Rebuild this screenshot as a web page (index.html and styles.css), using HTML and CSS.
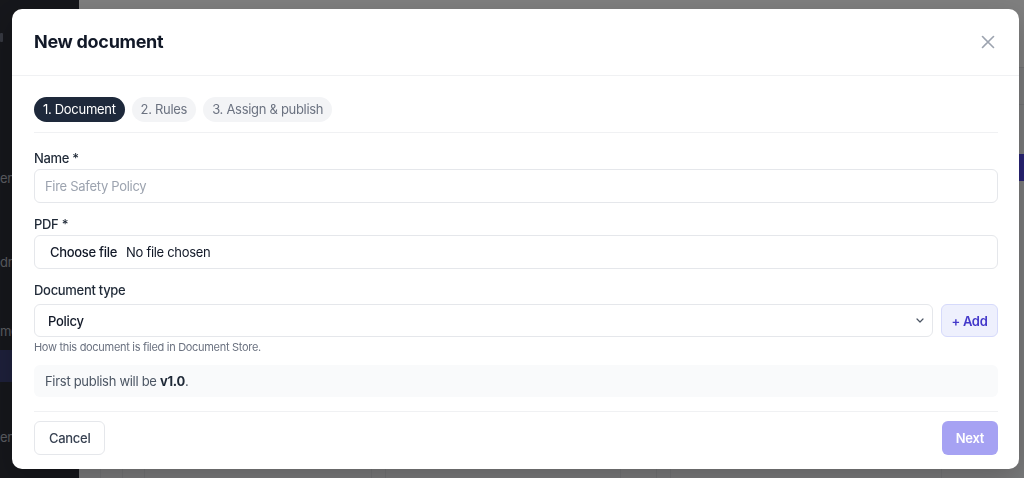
FILE: index.html
```html
<!DOCTYPE html>
<html lang="en">

<head>
    <meta charset="UTF-8">
    <meta name="viewport" content="width=device-width, initial-scale=1.0">
    <title>Documents | New document</title>
    <link rel="stylesheet" href="styles.css">
</head>

<body>
    <div class="app">
        <aside class="sidebar">
            <div class="sideLogo"></div>
            <nav class="sideNav">
                <a class="navItem item-first">entries</a>
                <a class="navItem item-second">drafts</a>
                <a class="navItem item-third">mem</a>
                <a class="navItem active"></a>
                <a class="navItem item-last">entry</a>
            </nav>
        </aside>

        <main class="main">
            <div class="topbar"></div>
            <div class="toolbar"></div>
            <div class="pageHead">
                <div class="primaryBtn"></div>
            </div>
            <div class="grid">
                <div class="card"><span class="col"></span><span class="col"></span></div>
                <div class="card"><span class="col wide"></span></div>
                <div class="card"></div>
            </div>
        </main>
    </div>

    <!-- Modal: nouveau document -->
    <div class="overlay">
        <div class="modal">
            <div class="modal_header">
                <h2>New document</h2>
                <button class="closeBtn" aria-label="Close">
                    <svg width="14" height="14" viewBox="0 0 14 14" fill="none" stroke="currentColor"
                        stroke-width="1.6" stroke-linecap="round">
                        <path d="M1.5 1.5 L12.5 12.5 M12.5 1.5 L1.5 12.5" />
                    </svg>
                </button>
            </div>

            <div class="modal_body">
                <div class="steps">
                    <span class="step current">1. Document</span>
                    <span class="step">2. Rules</span>
                    <span class="step">3. Assign &amp; publish</span>
                </div>

                <div class="field">
                    <label for="docName">Name *</label>
                    <input type="text" id="docName" class="form-control" placeholder="Fire Safety Policy">
                </div>

                <div class="field">
                    <label>PDF *</label>
                    <div class="form-control file_input">
                        <span class="file_btn">Choose file</span>
                        <span class="file_name">No file chosen</span>
                    </div>
                </div>

                <div class="field field-type">
                    <label for="docType">Document type</label>
                    <div class="type_row">
                        <div class="select_wrap">
                            <select id="docType" class="form-control">
                                <option>Policy</option>
                                <option>Procedure</option>
                                <option>Form</option>
                            </select>
                            <svg class="chevron" width="8" height="5" viewBox="0 0 8 5" fill="none"
                                stroke="currentColor" stroke-width="1.2" stroke-linecap="round"
                                stroke-linejoin="round">
                                <path d="M1 1 L4 4 L7 1" />
                            </svg>
                        </div>
                        <button class="addBtn">+ Add</button>
                    </div>
                    <p class="hint">How this document is filed in Document Store.</p>
                </div>

                <div class="info_box">First publish will be <strong>v1.0</strong>.</div>
            </div>

            <div class="modal_footer">
                <button class="btn btn-cancel">Cancel</button>
                <button class="btn btn-next" disabled>Next</button>
            </div>
        </div>
    </div>
</body>

</html>
```

FILE: styles.css
```css
* {
    box-sizing: border-box;
    margin: 0;
    padding: 0;
    font-family: 'Inter', 'Noto Sans', sans-serif;
    letter-spacing: -0.3px;
}

body {
    height: 100vh;
    overflow: hidden;
    background-color: #f3f4f6;
}

/* Page derrière la modale */
.app {
    display: flex;
    height: 100vh;
}

.sidebar {
    width: 79px;
    flex-shrink: 0;
    background-color: #2c2e37;
    overflow: hidden;
}

.sideLogo {
    width: 3px;
    height: 9px;
    margin-top: 33px;
    background-color: #6b7080;
    border-radius: 1px;
}

.sideNav {
    display: flex;
    flex-direction: column;
}

.navItem {
    display: block;
    color: #b4b8c0;
    font-size: 13px;
    white-space: nowrap;
    height: 32px;
    line-height: 32px;
}

.item-first {
    margin-top: 120px;
}

.item-second {
    margin-top: 52px;
}

.item-third {
    margin-top: 37px;
}

.navItem.active {
    margin-top: 3px;
    background-color: #3b4075;
}

.item-last {
    margin-top: 39px;
}

.main {
    flex: 1;
    background-color: #f3f4f6;
    display: flex;
    flex-direction: column;
}

.topbar {
    height: 68px;
    border-bottom: 1px solid #e3e4e8;
    background-color: #fff;
}

.toolbar {
    height: 37px;
    border-bottom: 1px solid #e3e4e8;
}

.pageHead {
    display: flex;
    justify-content: flex-end;
    padding: 49px 0 0 0;
}

.primaryBtn {
    background-color: #4f46e5;
    height: 27px;
    width: 8px;
}

.grid {
    display: flex;
    gap: 13px;
    padding: 0 21px;
    margin-top: auto;
    height: 60px;
}

.card {
    width: 272px;
    border-left: 1px solid #e6e7eb;
    border-right: 1px solid #e6e7eb;
    display: flex;
}

.col {
    width: 22px;
    border-right: 1px solid #e6e7eb;
}

.col.wide {
    width: 235px;
}

/* Modale */
.overlay {
    position: fixed;
    inset: 0;
    background-color: rgba(0, 0, 0, 0.5);
    padding: 9px 0 0 12px;
}

.modal {
    width: 1007px;
    background-color: #fff;
    border-radius: 10px;
    box-shadow: 0 10px 30px rgba(0, 0, 0, 0.2);
}

.modal_header {
    display: flex;
    justify-content: space-between;
    align-items: center;
    padding: 21px 22px 21px 22px;
    border-bottom: 1px solid #f0f1f3;
}

.modal_header h2 {
    font-size: 18px;
    font-weight: 700;
    line-height: 24px;
    color: #111827;
}

.closeBtn {
    border: none;
    background: none;
    color: #9ca3af;
    display: flex;
    margin-right: 2px;
}

.modal_body {
    padding: 21px 21px 0 22px;
}

.steps {
    display: flex;
    gap: 7px;
    padding-bottom: 10px;
    border-bottom: 1px solid #f0f1f3;
}

.step {
    height: 25px;
    line-height: 25px;
    padding: 0 9px;
    border-radius: 13px;
    font-size: 13px;
    color: #6b7280;
    background-color: #f3f4f6;
}

.step.current {
    background-color: #1e293b;
    color: #fff;
}

.field {
    margin-top: 16px;
}

.field+.field {
    margin-top: 12px;
}

.field label {
    display: block;
    font-size: 13px;
    font-weight: 500;
    color: #1f2937;
    line-height: 18px;
    margin-bottom: 2px;
}

.field-type label {
    margin-bottom: 5px;
}

.form-control {
    width: 100%;
    height: 34px;
    border: 1px solid #e5e7eb;
    border-radius: 6px;
    background-color: #fff;
    font-size: 13px;
    color: #111827;
    padding: 0 10px;
    outline: none;
}

.form-control::placeholder {
    color: #9ca3af;
}

.file_input {
    display: flex;
    align-items: center;
}

.file_btn {
    font-weight: 500;
    margin-left: 5px;
    margin-right: 9px;
}

.type_row {
    display: flex;
    gap: 8px;
}

.select_wrap {
    position: relative;
    flex: 1;
}

.select_wrap select {
    appearance: none;
    padding-left: 13px;
    height: 33px;
    font-weight: 500;
}

.chevron {
    position: absolute;
    right: 9px;
    top: 14px;
    color: #4b5563;
}

.addBtn {
    width: 57px;
    height: 33px;
    border: 1px solid #d6dafb;
    border-radius: 6px;
    background-color: #eef0fd;
    color: #4338ca;
    font-size: 13px;
    font-weight: 600;
}

.hint {
    font-size: 11px;
    color: #6b7280;
    line-height: 14px;
    margin-top: 3px;
}

.info_box {
    margin-top: 11px;
    height: 32px;
    line-height: 32px;
    padding: 0 11px;
    border-radius: 6px;
    background-color: #f9fafb;
    font-size: 13px;
    color: #4b5563;
}

.info_box strong {
    color: #1f2937;
}

.modal_footer {
    display: flex;
    justify-content: space-between;
    margin: 14px 21px 0 22px;
    padding: 9px 0 14px 0;
    border-top: 1px solid #f0f1f3;
}

.btn {
    height: 34px;
    padding: 0 14px;
    border-radius: 6px;
    font-size: 13px;
    cursor: pointer;
}

.btn-cancel {
    border: 1px solid #e5e7eb;
    background-color: #fff;
    color: #374151;
    font-weight: 500;
}

.btn-next {
    border: none;
    background-color: #a6a2f3;
    color: #fff;
    font-weight: 600;
}
```
